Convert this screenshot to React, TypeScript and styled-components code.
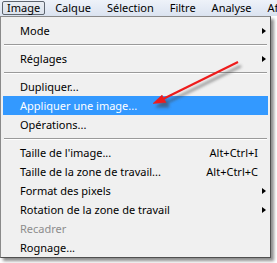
import React from "react";
import styled, { createGlobalStyle } from "styled-components";

const GlobalStyle = createGlobalStyle`
  html, body {
    margin: 0;
    padding: 0;
    background: #ffffff;
  }
`;

const barItems = ["Image", "Calque", "Sélection", "Filtre", "Analyse", "Affichage"];

const menuItems = [
  { label: "Mode", submenu: true },
  { separator: true },
  { label: "Réglages", submenu: true },
  { separator: true },
  { label: "Dupliquer..." },
  { label: "Appliquer une image...", active: true },
  { label: "Opérations..." },
  { separator: true },
  { label: "Taille de l'image...", shortcut: "Alt+Ctrl+I" },
  { label: "Taille de la zone de travail...", shortcut: "Alt+Ctrl+C" },
  { label: "Format des pixels", submenu: true },
  { label: "Rotation de la zone de travail", submenu: true },
  { label: "Recadrer", disabled: true },
  { label: "Rognage..." },
];

const Screen = styled.div`
  position: relative;
  width: 277px;
  height: 263px;
  overflow: hidden;
  font-family: "Noto Sans", "Open Sans", sans-serif;
  font-size: 11px;
  color: #000;
`;

const MenuBar = styled.div`
  display: flex;
  align-items: center;
  height: 16px;
  padding-left: 2px;
  overflow: hidden;
  background: linear-gradient(#eef2f9, #dbe3f0);
  white-space: nowrap;
`;

const BarItem = styled.div<{ $active?: boolean }>`
  box-sizing: border-box;
  flex: none;
  height: 14px;
  line-height: 12px;
  padding: 0 ${(p) => (p.$active ? "4px" : "7px")};
  margin-right: ${(p) => (p.$active ? "2px" : "0")};
  border: 1px solid ${(p) => (p.$active ? "#5e6670" : "transparent")};
  border-radius: 2px;
  background: ${(p) => (p.$active ? "linear-gradient(#e9edf3, #dde3ec)" : "transparent")};
`;

const MenuPanel = styled.div`
  box-sizing: border-box;
  width: 271px;
  height: 242px;
  padding: 4px 2px 2px 2px;
  background: #f0f0f0;
  border: 1px solid #8a8a8a;
  border-right-color: #4f4f4f;
  border-bottom-color: #4f4f4f;
  box-shadow: 3px 3px 3px rgba(0, 0, 0, 0.45);
`;

const Item = styled.div<{ $active?: boolean; $disabled?: boolean }>`
  display: flex;
  align-items: center;
  height: 19px;
  padding: 0 2px 0 17px;
  background: ${(p) => (p.$active ? "#3399ff" : "transparent")};
  color: ${(p) => (p.$active ? "#ffffff" : p.$disabled ? "#8d8d8d" : "#000000")};
  white-space: nowrap;
`;

const Label = styled.span`
  flex: 1;
`;

const Shortcut = styled.span`
  padding-right: 8px;
`;

const SubArrow = styled.span`
  width: 0;
  height: 0;
  border-top: 3.5px solid transparent;
  border-bottom: 3.5px solid transparent;
  border-left: 4px solid #000;
`;

const Separator = styled.div`
  height: 9px;
  display: flex;
  align-items: center;
  padding: 0 1px;

  &::before {
    content: "";
    flex: 1;
    height: 1px;
    background: #9a9a9a;
    border-bottom: 1px solid #ffffff;
  }
`;

const Callout = styled.svg`
  position: absolute;
  left: 0;
  top: 0;
  pointer-events: none;
`;

function App() {
  return (
    <Screen>
      <GlobalStyle />
      <MenuBar>
        {barItems.map((item, i) => (
          <BarItem key={item} $active={i === 0}>
            {item}
          </BarItem>
        ))}
      </MenuBar>
      <MenuPanel>
        {menuItems.map((item, i) => {
          if (item.separator) return <Separator key={i} />;
          return (
            <Item key={i} $active={item.active} $disabled={item.disabled}>
              <Label>{item.label}</Label>
              {item.shortcut && <Shortcut>{item.shortcut}</Shortcut>}
              {item.submenu && <SubArrow />}
            </Item>
          );
        })}
      </MenuPanel>
      <Callout width="277" height="263" viewBox="0 0 277 263">
        <defs>
          <filter id="blur" x="-20%" y="-20%" width="140%" height="140%">
            <feGaussianBlur stdDeviation="1.6" />
          </filter>
        </defs>
        <g transform="translate(3 4)" fill="#444" stroke="#444" opacity="0.6" filter="url(#blur)">
          <line x1="238" y1="62" x2="161" y2="100" strokeWidth="2.5" />
          <polygon points="153,103 163,95 166,103" />
        </g>
        <g fill="#ee1c1c" stroke="#ee1c1c">
          <line x1="238" y1="62" x2="161" y2="100" strokeWidth="2.2" />
          <polygon points="153,103.5 162,95 166,102.5" strokeWidth="0.5" />
        </g>
      </Callout>
    </Screen>
  );
}

export default App;
